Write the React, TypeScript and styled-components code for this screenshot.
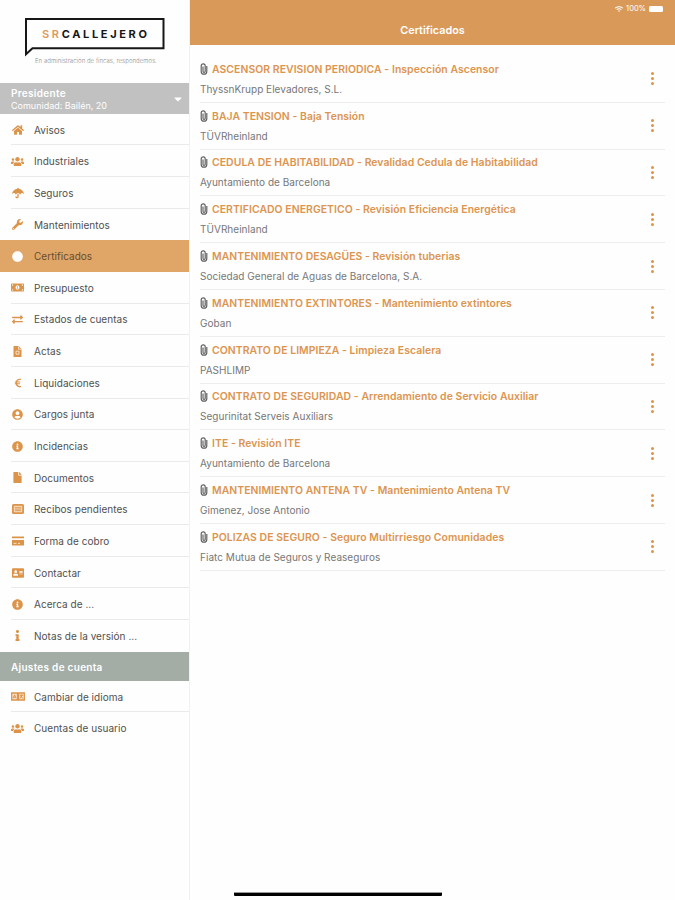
import React from "react";
import styled, { createGlobalStyle } from "styled-components";
import type { IconType } from "react-icons";
import {
  FaHome, FaUsers, FaUmbrella, FaWrench, FaCircle, FaMoneyBillAlt, FaExchangeAlt,
  FaEuroSign, FaUserCircle, FaInfoCircle, FaFile, FaAddressCard, FaInfo, FaWifi, FaCaretDown,
} from "react-icons/fa";

const GlobalStyle = createGlobalStyle`
  * { box-sizing: border-box; }
  body { margin: 0; background: #fff; font-family: Inter, "Liberation Sans", sans-serif; }
`;

const Screen = styled.div`
  display: grid;
  grid-template-columns: 190px 1fr;
  width: 675px;
  height: 900px;
  overflow: hidden;
  position: relative;
  background: #fefefe;
`;

const Sidebar = styled.aside`
  border-right: 1px solid #f1f1f1;
  display: flex;
  flex-direction: column;
`;

const Brand = styled.div`
  height: 83px;
  flex: none;
  padding: 17px 0 0 24px;
`;

const Logo = styled.svg`
  display: block;
`;

const Community = styled.div`
  height: 30.8px;
  flex: none;
  background: #c1c1c1;
  color: #fff;
  display: flex;
  align-items: center;
  justify-content: space-between;
  padding: 2px 5px 0 11px;
`;

const Role = styled.div`
  font-size: 10px;
  line-height: 13px;
  font-weight: 600;
  letter-spacing: 0.3px;
`;

const Address = styled.div`
  font-size: 9px;
  line-height: 12px;
`;

const Menu = styled.ul`
  list-style: none;
  margin: 0;
  padding: 0;
`;

const MenuItem = styled.li<{ $active?: boolean }>`
  height: 31.65px;
  display: flex;
  align-items: center;
  padding-left: 11px;
  background: ${(p) => (p.$active ? "#dfa668" : "transparent")};
  color: ${(p) => (p.$active ? "#6b4b2b" : "#505050")};
`;

const MenuIcon = styled.span<{ $active?: boolean }>`
  width: 13px;
  display: flex;
  justify-content: center;
  color: ${(p) => (p.$active ? "#fff" : "#dc944b")};

  svg {
    flex: none;
  }
`;

const Label = styled.span`
  margin-left: 10px;
  font-size: 10px;
  letter-spacing: 0.04px;
  white-space: nowrap;
`;

const Divider = styled.hr`
  margin: -1px 0 0 11px;
  border: 0;
  height: 1px;
  background: #eaeaea;
`;

const SectionTitle = styled.div`
  height: 29px;
  flex: none;
  background: #a3ada6;
  color: #fff;
  font-size: 10px;
  font-weight: 600;
  letter-spacing: 0.28px;
  line-height: 30px;
  padding-left: 11px;
`;

const Main = styled.main`
  display: flex;
  flex-direction: column;
`;

const Header = styled.header`
  height: 45px;
  flex: none;
  background: #d99a59;
  color: #fff;
`;

const StatusBar = styled.div`
  height: 17px;
  display: flex;
  align-items: center;
  justify-content: flex-end;
  gap: 3px;
  padding-right: 12px;
  font-size: 7.5px;
`;

const Battery = styled.span`
  width: 14px;
  height: 6px;
  border-radius: 1.5px;
  background: #fff;
`;

const PageTitle = styled.h1`
  margin: 0;
  text-align: center;
  font-size: 10.8px;
  font-weight: 600;
  line-height: 28px;
`;

const List = styled.ul`
  list-style: none;
  margin: 0;
  padding: 11px 10px 0 10px;
`;

const Row = styled.li`
  height: 46.8px;
  display: flex;
  justify-content: space-between;
  align-items: center;
  border-bottom: 1px solid #ededed;
  padding-right: 11.5px;
`;

const TitleLine = styled.div`
  display: flex;
  align-items: center;
  height: 20px;
  font-size: 10.4px;
  font-weight: 600;
  letter-spacing: 0.07px;
  color: #dc9550;
  white-space: nowrap;
`;

const TitleText = styled.span`
  padding-top: 1px;
`;

const Provider = styled.div`
  height: 20px;
  line-height: 20px;
  font-size: 10px;
  letter-spacing: 0.03px;
  color: #777;
  white-space: nowrap;
`;

const Clip = styled.svg`
  width: 8px;
  height: 12px;
  margin-right: 4px;
  flex: none;
`;

const MoreButton = styled.button`
  border: 0;
  padding: 0;
  background: none;
  display: flex;
  flex-direction: column;
  gap: 2px;
`;

const Dot = styled.span`
  width: 3px;
  height: 3px;
  border-radius: 50%;
  background: #dc944b;
`;

const HomeBar = styled.div`
  position: absolute;
  left: 234px;
  bottom: 4px;
  width: 208px;
  height: 4px;
  border-radius: 1px;
  background: #000;
  border-top: 1px solid #999;
`;

const MinutesIcon: IconType = () => (
  <svg width="9" height="11" viewBox="0 0 9 11">
    <path d="M0.5 0h5l3 3v8h-8z" fill="currentColor" />
    <path d="M5.5 0.5v2.8h3M3 5.2h3v3H3z" fill="none" stroke="#f9e5d0" strokeWidth="0.9" />
  </svg>
);

const ReceiptIcon: IconType = () => (
  <svg width="12" height="10" viewBox="0 0 12 10">
    <rect x="0.9" y="0.9" width="10.2" height="8.2" rx="0.6" fill="#f3d5b3" stroke="currentColor" strokeWidth="1.8" />
    <path d="M3 3.6h6M3 5.1h6M3 6.6h6" stroke="currentColor" strokeWidth="0.8" />
  </svg>
);

const PaymentIcon: IconType = () => (
  <svg width="12" height="10" viewBox="0 0 12 10">
    <path d="M0 0.5h12v1.8H0zM0 4h12v5.5H0z" fill="currentColor" />
    <path d="M1.5 7.4h3M6 7.4h2" stroke="#f8e2ca" strokeWidth="0.9" />
  </svg>
);

const LanguageIcon: IconType = () => (
  <svg width="14" height="9" viewBox="0 0 14 9">
    <path d="M0.7 1h5.8v7H0.7zM7.5 1h5.8v7H7.5z" fill="#f9e5d0" stroke="currentColor" strokeWidth="1.3" />
    <path d="M2.2 6.3 3.6 2.8 5 6.3M2.7 5.2h1.8M8.8 3.3H12M10.4 2.3v1M9 6.4l2.4-3M9.4 4.2l2.5 2.2" fill="none" stroke="currentColor" strokeWidth="1" />
  </svg>
);

type Entry = { icon: IconType; label: string; size: number; active?: boolean };

const menu: Entry[] = [
  { icon: FaHome, label: "Avisos", size: 12 },
  { icon: FaUsers, label: "Industriales", size: 13 },
  { icon: FaUmbrella, label: "Seguros", size: 12 },
  { icon: FaWrench, label: "Mantenimientos", size: 11 },
  { icon: FaCircle, label: "Certificados", size: 11, active: true },
  { icon: FaMoneyBillAlt, label: "Presupuesto", size: 13 },
  { icon: FaExchangeAlt, label: "Estados de cuentas", size: 11 },
  { icon: MinutesIcon, label: "Actas", size: 11 },
  { icon: FaEuroSign, label: "Liquidaciones", size: 10 },
  { icon: FaUserCircle, label: "Cargos junta", size: 11 },
  { icon: FaInfoCircle, label: "Incidencias", size: 11 },
  { icon: FaFile, label: "Documentos", size: 11 },
  { icon: ReceiptIcon, label: "Recibos pendientes", size: 11 },
  { icon: PaymentIcon, label: "Forma de cobro", size: 12 },
  { icon: FaAddressCard, label: "Contactar", size: 12 },
  { icon: FaInfoCircle, label: "Acerca de ...", size: 11 },
  { icon: FaInfo, label: "Notas de la versión ...", size: 11 },
];

const account: Entry[] = [
  { icon: LanguageIcon, label: "Cambiar de idioma", size: 13 },
  { icon: FaUsers, label: "Cuentas de usuario", size: 13 },
];

const certificates: [string, string][] = [
  ["ASCENSOR REVISION PERIODICA - Inspección Ascensor", "ThyssnKrupp Elevadores, S.L."],
  ["BAJA TENSION - Baja Tensión", "TÜVRheinland"],
  ["CEDULA DE HABITABILIDAD - Revalidad Cedula de Habitabilidad", "Ayuntamiento de Barcelona"],
  ["CERTIFICADO ENERGETICO - Revisión Eficiencia Energética", "TÜVRheinland"],
  ["MANTENIMIENTO DESAGÜES - Revisión tuberias", "Sociedad General de Aguas de Barcelona, S.A."],
  ["MANTENIMIENTO EXTINTORES - Mantenimiento extintores", "Goban"],
  ["CONTRATO DE LIMPIEZA - Limpieza Escalera", "PASHLIMP"],
  ["CONTRATO DE SEGURIDAD - Arrendamiento de Servicio Auxiliar", "Segurinitat Serveis Auxiliars"],
  ["ITE - Revisión ITE", "Ayuntamiento de Barcelona"],
  ["MANTENIMIENTO ANTENA TV - Mantenimiento Antena TV", "Gimenez, Jose Antonio"],
  ["POLIZAS DE SEGURO - Seguro Multirriesgo Comunidades", "Fiatc Mutua de Seguros y Reaseguros"],
];

const MenuList = ({ items }: { items: Entry[] }) => (
  <Menu>
    {items.map(({ icon: Icon, label, size, active }, i) => (
      <React.Fragment key={label}>
        <MenuItem $active={active}>
          <MenuIcon $active={active}><Icon size={size} /></MenuIcon>
          <Label>{label}</Label>
        </MenuItem>
        {i < items.length - 1 && !active && !items[i + 1].active && <Divider />}
      </React.Fragment>
    ))}
  </Menu>
);

export default function App() {
  return (
    <Screen>
      <GlobalStyle />
      <Sidebar>
        <Brand>
          <Logo width="145" height="50" viewBox="0 0 145 50">
            <path d="M2 2H139.5V31.3H8.5L2 37.3Z" fill="none" stroke="#171717" strokeWidth="2" />
            <text x="18" y="21" fontSize="11" fontWeight="700" textLength="105" fill="#171717">
              <tspan fill="#dc9a5c" fontWeight="600">SR</tspan>CALLEJERO
            </text>
            <text x="11" y="46" fontSize="6" fontWeight="300" textLength="122" fill="#8d8d8d">
              En administración de fincas, respondemos.
            </text>
          </Logo>
        </Brand>
        <Community>
          <div>
            <Role>Presidente</Role>
            <Address>Comunidad: Bailén, 20</Address>
          </div>
          <FaCaretDown size={12} />
        </Community>
        <MenuList items={menu} />
        <SectionTitle>Ajustes de cuenta</SectionTitle>
        <MenuList items={account} />
      </Sidebar>
      <Main>
        <Header>
          <StatusBar>
            <FaWifi size={8} />
            <span>100%</span>
            <Battery />
          </StatusBar>
          <PageTitle>Certificados</PageTitle>
        </Header>
        <List>
          {certificates.map(([title, provider]) => (
            <Row key={title}>
              <div>
                <TitleLine>
                  <Clip viewBox="0 0 8 12">
                    <path d="M6.8 3v5.4a2.8 2.8 0 0 1-5.6 0V2.8a2 2 0 0 1 4 0v5.4a1.1 1.1 0 0 1-2.2 0V3.4" fill="none" stroke="#5c5c5c" strokeWidth="1.15" />
                  </Clip>
                  <TitleText>{title}</TitleText>
                </TitleLine>
                <Provider>{provider}</Provider>
              </div>
              <MoreButton aria-label="Más opciones">
                <Dot /><Dot /><Dot />
              </MoreButton>
            </Row>
          ))}
        </List>
      </Main>
      <HomeBar />
    </Screen>
  );
}
